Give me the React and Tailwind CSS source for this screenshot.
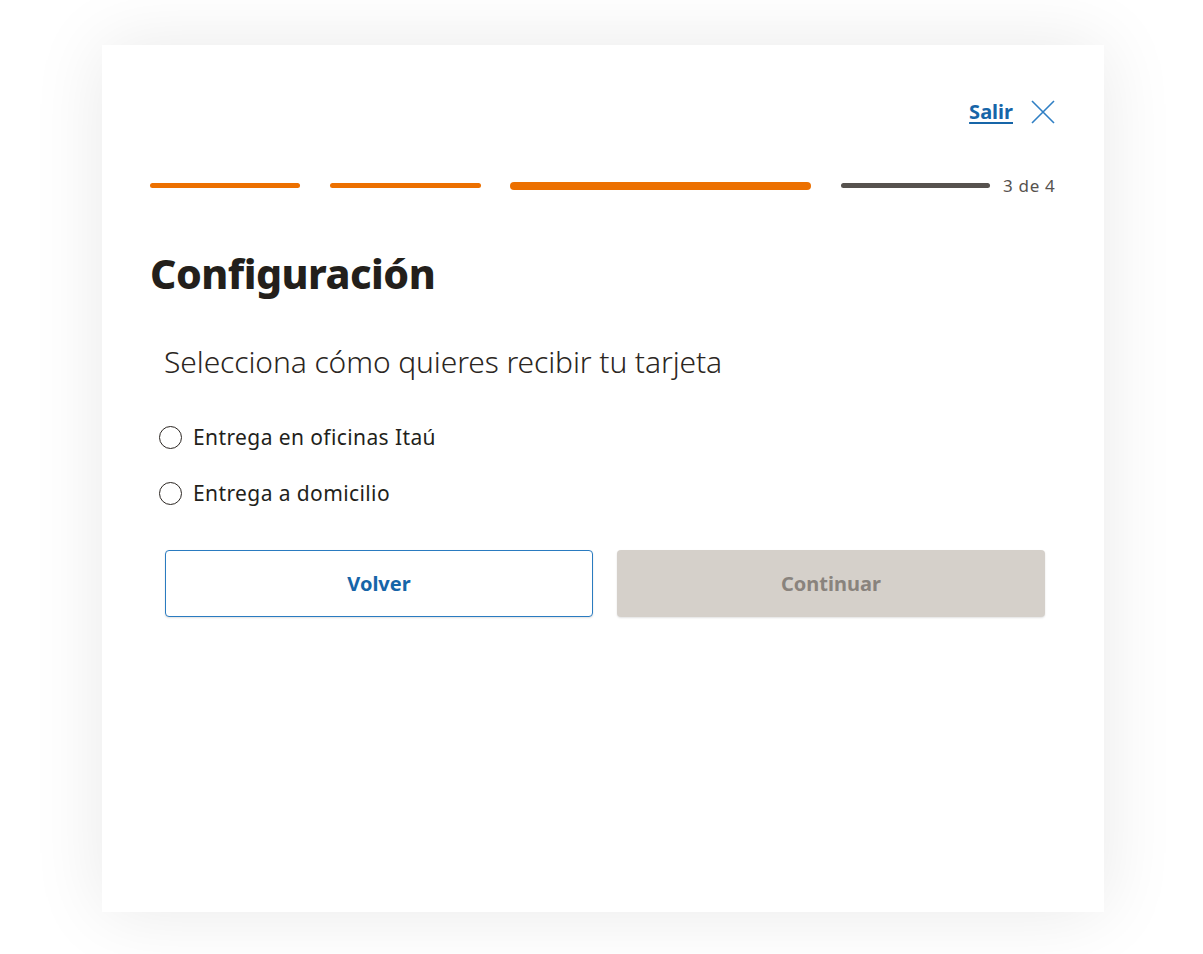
const font = { fontFamily: '"Noto Sans", "Open Sans", sans-serif' };

const Option = ({ label }) => (
  <label className="flex items-center gap-[11px] cursor-pointer">
    <span className="w-[23px] h-[23px] rounded-full border-[1.5px] border-[#2b2622] bg-white" />
    <span className="text-[21px] tracking-[0.4px] text-[#231f1b] leading-none">{label}</span>
  </label>
);

export default function App() {
  return (
    <div className="w-full min-h-[954px] bg-white pt-[45px]" style={font}>
      <div className="ml-[102px] w-[1002px] h-[867px] bg-white shadow-[0_0_70px_rgba(0,0,0,0.09)] px-[48px] pt-[52px]">
        <div className="flex justify-end items-center gap-[18px] pr-[1px]">
          <a href="#" className="text-[20px] font-bold text-[#1665a8] underline underline-offset-[3px] decoration-2">
            Salir
          </a>
          <svg width="24" height="24" viewBox="0 0 24 24" fill="none" stroke="#2f7fc4" strokeWidth="1.6">
            <path d="M1 1 L23 23 M23 1 L1 23" />
          </svg>
        </div>

        <div className="flex items-center mt-[50px]">
          <div className="w-[150px] h-[5px] rounded-full bg-[#ec7000]" />
          <div className="w-[151px] h-[5px] rounded-full bg-[#ec7000] ml-[30px]" />
          <div className="w-[301px] h-[8px] rounded-full bg-[#ec7000] ml-[29px]" />
          <div className="w-[149px] h-[5px] rounded-full bg-[#56524e] ml-[30px]" />
          <span className="ml-[13px] text-[17px] tracking-[0.7px] text-[#56524e] leading-none">3 de 4</span>
        </div>

        <h1 className="mt-[51px] text-[41px] font-extrabold text-[#231f1b] tracking-[-0.5px] leading-[56px]">
          Configuración
        </h1>

        <p className="mt-[41px] ml-[14px] text-[30px] font-light text-[#2b2622] tracking-[-0.1px] leading-[40px]">
          Selecciona cómo quieres recibir tu tarjeta
        </p>

        <div className="mt-[44px] ml-[9px] flex flex-col gap-[33px]">
          <Option label="Entrega en oficinas Itaú" />
          <Option label="Entrega a domicilio" />
        </div>

        <div className="mt-[45px] ml-[15px] mr-[11px] grid grid-cols-2 gap-[24px]">
          <button className="h-[67px] rounded-[4px] border border-[#2a7bc0] bg-white text-[20px] font-bold text-[#1665a8] shadow-[0_1px_2px_rgba(0,0,0,0.12)]">
            Volver
          </button>
          <button disabled className="h-[67px] rounded-[4px] bg-[#d5d0ca] text-[20px] font-bold text-[#89837d] shadow-[0_1px_2px_rgba(0,0,0,0.12)]">
            Continuar
          </button>
        </div>
      </div>
    </div>
  );
}
